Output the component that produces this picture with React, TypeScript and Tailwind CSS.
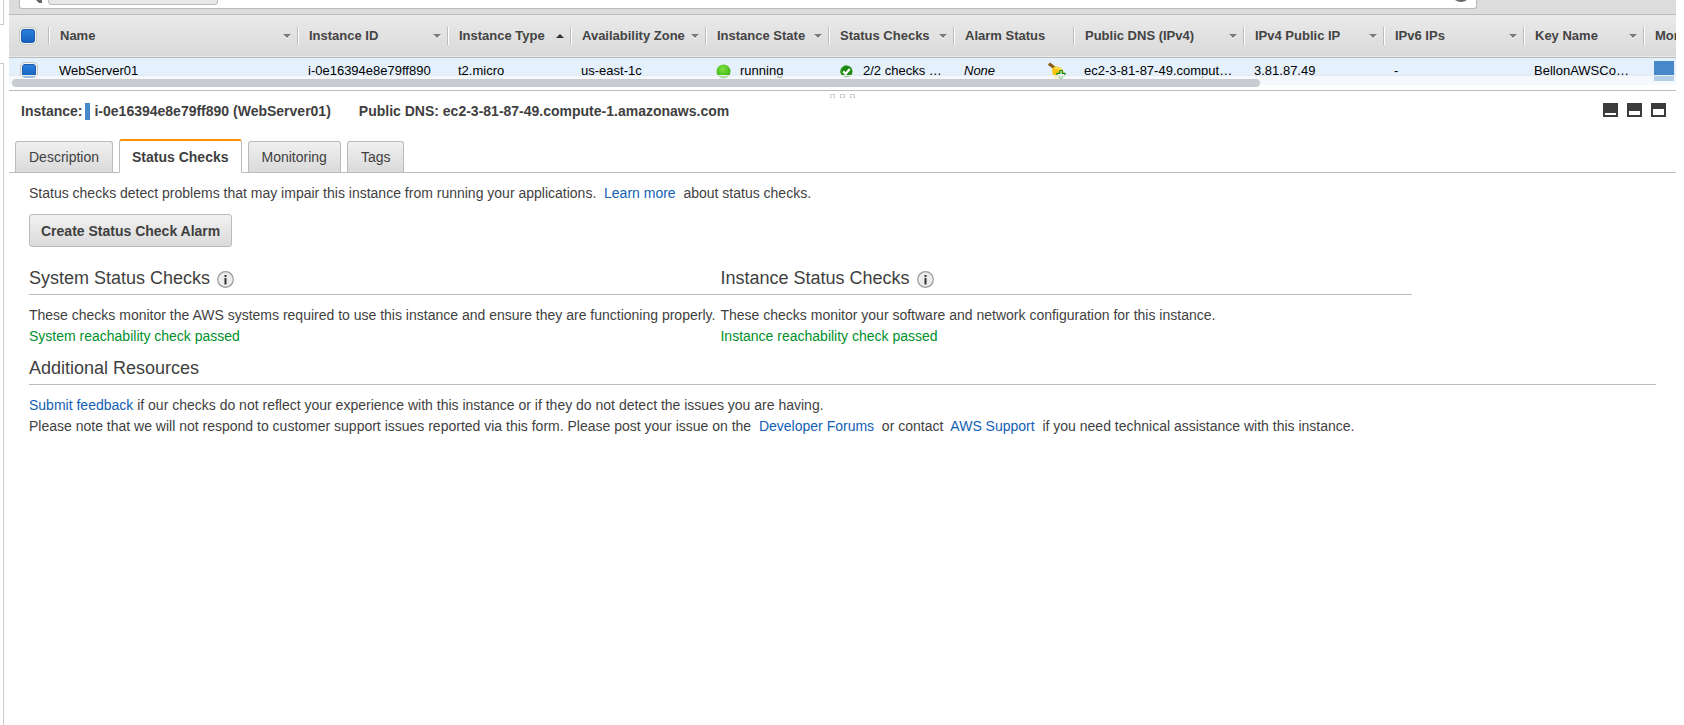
import type { ReactNode } from "react";

type Sort = "none" | "menu" | "asc";

interface Column {
  label: string;
  width: string;
  sort: Sort;
  cell: ReactNode;
}

function RunningIcon() {
  return (
    <svg width="15" height="15" viewBox="0 0 15 15" aria-hidden="true" className="shrink-0">
      <defs>
        <radialGradient id="run" cx="0.45" cy="0.3" r="0.7">
          <stop offset="0" stopColor="#7fe03f" />
          <stop offset="0.7" stopColor="#4cc01f" />
          <stop offset="1" stopColor="#3c9c1c" />
        </radialGradient>
      </defs>
      <circle cx="7.5" cy="7.5" r="7" fill="url(#run)" />
    </svg>
  );
}

function PassedIcon() {
  return (
    <svg width="15" height="13" viewBox="-1 0 15 13" aria-hidden="true" className="shrink-0">
      <circle cx="6.5" cy="6.5" r="6" fill="#1f8a12" />
      <path d="M1 8.5a6 6 0 0 1 6-7.9" fill="none" stroke="#4fae3a" strokeWidth="1" />
      <path d="M3.2 6.400l2.400 2.400L9.800 4" fill="none" stroke="#fff" strokeWidth="2.2" />
    </svg>
  );
}

function AlarmIcon() {
  return (
    <svg width="18" height="18" viewBox="0 0 18 18" aria-hidden="true" className="shrink-0">
      <path d="M2 2.500l4 3" stroke="#8a5a12" strokeWidth="3" strokeLinecap="square" />
      <path d="M5 5.500C8 3.500 12 4.500 15 8l1 3-8 6-2-2c-2-3-2.500-7-1-9.500z" fill="#f9c80e" />
      <path d="M7 7c2-1.500 5-.5 7 2" stroke="#ffe566" strokeWidth="1.500" fill="none" />
      <path d="M7 15.500l6-4 2 4-5 2z" fill="#f3dca0" />
      <path
        d="M11.800 8.500h2.400v2.800h2.800v2.400h-2.800v2.800h-2.400v-2.800H9v-2.400h2.800z"
        fill="#e9f7e6"
        stroke="#178a1c"
        strokeWidth="1.200"
      />
    </svg>
  );
}

function SortArrow({ sort }: { sort: Sort }) {
  if (sort === "none") return null;
  return (
    <svg width="8" height="6" viewBox="0 0 8 6" aria-hidden="true" className="shrink-0">
      {sort === "asc" ? (
        <path d="M0 5h8L4 1z" fill="#333" />
      ) : (
        <>
          <path d="M0 2h8L4 6z" fill="#fff" />
          <path d="M0 1h8L4 5z" fill="#7a7a7a" />
        </>
      )}
    </svg>
  );
}

function InfoIcon() {
  return (
    <svg width="17" height="17" viewBox="0 0 17 17" aria-hidden="true">
      <circle cx="8.500" cy="8.500" r="7.800" fill="#ececec" stroke="#999" strokeWidth="1.200" />
      <rect x="7.500" y="4" width="2" height="2" fill="#333" />
      <rect x="7.500" y="7" width="2" height="6.500" fill="#333" />
    </svg>
  );
}

const columns: Column[] = [
  { label: "Name", width: "w-[249px]", sort: "menu", cell: "WebServer01" },
  { label: "Instance ID", width: "w-[150px]", sort: "menu", cell: "i-0e16394e8e79ff890" },
  { label: "Instance Type", width: "w-[123px]", sort: "asc", cell: "t2.micro" },
  { label: "Availability Zone", width: "w-[135px]", sort: "menu", cell: "us-east-1c" },
  {
    label: "Instance State",
    width: "w-[123px]",
    sort: "menu",
    cell: (
      <span className="flex items-center gap-[9px]">
        <RunningIcon />
        running
      </span>
    ),
  },
  {
    label: "Status Checks",
    width: "w-[125px]",
    sort: "menu",
    cell: (
      <span className="flex items-center gap-[9px]">
        <PassedIcon />
        2/2 checks …
      </span>
    ),
  },
  {
    label: "Alarm Status",
    width: "w-[120px]",
    sort: "none",
    cell: (
      <span className="flex items-center justify-between">
        <em>None</em>
        <AlarmIcon />
      </span>
    ),
  },
  { label: "Public DNS (IPv4)", width: "w-[170px]", sort: "menu", cell: "ec2-3-81-87-49.comput…" },
  { label: "IPv4 Public IP", width: "w-[140px]", sort: "menu", cell: "3.81.87.49" },
  { label: "IPv6 IPs", width: "w-[140px]", sort: "menu", cell: "-" },
  { label: "Key Name", width: "w-[120px]", sort: "menu", cell: "BellonAWSCo…" },
  {
    label: "Monitoring",
    width: "w-[580px]",
    sort: "none",
    cell: <span className="block h-5 w-5 bg-[#4788c8]" />,
  },
];

const checkboxClass =
  "block h-[14px] w-[14px] appearance-none rounded-[3px] border border-[#1a5cab] bg-linear-to-b from-[#2b80dd] to-[#1560bd] shadow-[0_0_0_1px_#f4f4f4,0_0_0_2px_#c6c6c6]";

function InstanceTable() {
  return (
    <div className="relative h-[76px] overflow-hidden border-b border-[#bbb]">
      <table className="w-max table-fixed border-collapse text-left text-[13px] leading-4">
        <thead>
          <tr className="h-[42px] border-b border-[#bbb] bg-linear-to-b from-[#eaeaea] to-[#d9d9d9] text-[#444]">
            <th className="w-[39px] p-0 pl-3">
              <input type="checkbox" defaultChecked aria-label="Select all instances" className={checkboxClass} />
            </th>
            {columns.map((c) => (
              <th key={c.label} className={`${c.width} p-0 font-bold whitespace-nowrap`}>
                <div className="flex h-[18px] items-center justify-between border-l border-[#bbb] pr-[6px] pl-[11px] shadow-[inset_1px_0_0_#fff]">
                  {c.label}
                  <SortArrow sort={c.sort} />
                </div>
              </th>
            ))}
          </tr>
        </thead>
        <tbody>
          <tr className="h-[28px] bg-[#e5f0fd] text-black">
            <td className="p-0 pl-[13px]">
              <input type="checkbox" defaultChecked aria-label="Select WebServer01" className={checkboxClass} />
            </td>
            {columns.map((c) => (
              <td key={c.label} className="overflow-hidden py-0 pr-[7px] pl-[11px] whitespace-nowrap">
                {c.cell}
              </td>
            ))}
          </tr>
        </tbody>
      </table>
      <div className="absolute inset-x-0 bottom-0 h-[15px] border-t border-[#e6e9ee] bg-white/60 pt-[3px] pl-[3px]">
        <div className="h-2 w-3/4 rounded-full bg-[#c9cbd0]" />
      </div>
    </div>
  );
}

const tabs = ["Description", "Status Checks", "Monitoring", "Tags"];

function Tabs() {
  return (
    <div role="tablist" className="flex items-end gap-[6px] border-b border-[#bbb] pl-[6px]">
      {tabs.map((t) =>
        t === "Status Checks" ? (
          <button
            key={t}
            role="tab"
            aria-selected="true"
            className="-mb-px h-[34px] rounded-t-[3px] border border-t-2 border-[#bbb] border-t-[#ff9100] border-b-white bg-white px-3 pt-[2px] font-bold"
          >
            {t}
          </button>
        ) : (
          <button
            key={t}
            role="tab"
            aria-selected="false"
            className="h-[31px] rounded-t-[3px] border border-b-0 border-[#bbb] bg-linear-to-b from-[#f0f0f0] to-[#dadada] px-[13px]"
          >
            {t}
          </button>
        ),
      )}
    </div>
  );
}

function CheckColumn({ title, text, result }: { title: string; text: string; result: string }) {
  return (
    <section>
      <h2 className="mb-[10px] flex items-center gap-[7px] border-b border-[#bbb] pb-px text-lg leading-[29px]">
        {title}
        <span className="pt-[2px]">
          <InfoIcon />
        </span>
      </h2>
      <p className="whitespace-nowrap">{text}</p>
      <p className="text-[#00902b]">{result}</p>
    </section>
  );
}

function Link({ children }: { children: ReactNode }) {
  return (
    <a href="#" className="text-[#1260b5]">
      {children}
    </a>
  );
}

function PaneButton({ label, bar }: { label: string; bar: string }) {
  return (
    <button aria-label={label} className={`h-[14px] w-[15px] border-2 border-[#3c3c3c] bg-white ${bar}`} />
  );
}

export default function App() {
  return (
    <div className="flex min-h-screen bg-white pr-2 font-['Liberation_Sans',Arial,sans-serif] text-sm leading-[21px] text-[#3f3f3f]">
      <aside className="flex w-1 shrink-0 flex-col gap-[38px]">
        <div className="h-[25px] border-r border-b border-[#ccc]" />
        <div className="flex-1 border-t border-r border-[#ccc]" />
      </aside>

      <main className="ml-[5px] min-w-0 flex-1">
        <div className="flex h-[15px] items-start border-b border-[#bbb] bg-[#dcdcdc] pl-[10px]">
          <div className="flex h-[9px] w-[88%] items-start justify-between rounded-b-[3px] border border-t-0 border-[#bbb] bg-white pr-[9px] pl-4">
            <div className="flex items-start gap-[6px]">
              <svg width="6" height="3" viewBox="0 0 6 3" aria-hidden="true">
                <path d="M0 0h6v3H3z" fill="#666" />
              </svg>
              <div className="h-[5px] w-[170px] rounded-b-[4px] border border-t-0 border-[#bbb] bg-[#e8e8e8]" />
            </div>
            <svg width="12" height="2" viewBox="0 0 12 2" aria-hidden="true">
              <path d="M0 0h12Q6 4 0 0z" fill="#666" />
            </svg>
          </div>
        </div>

        <InstanceTable />

        <div className="flex justify-center gap-[5px] pt-[3px]">
          {[0, 1, 2].map((i) => (
            <svg key={i} width="5" height="4" viewBox="0 0 5 4" aria-hidden="true">
              <path d="M0.500 4V.5h4V4M0 3.500h2M3 3.500h2" fill="none" stroke="#ccc" />
            </svg>
          ))}
        </div>

        <div className="flex items-start justify-between pt-[3px] pr-[10px] pl-3 font-bold">
          <div className="flex items-center">
            Instance:
            <span className="mr-1 ml-[3px] h-[17px] w-[5px] bg-[#4788c8]" />
            i-0e16394e8e79ff890 (WebServer01)
            <span className="ml-7">Public DNS: ec2-3-81-87-49.compute-1.amazonaws.com</span>
          </div>
          <div className="flex gap-[9px] pt-[2px]">
            <PaneButton label="Minimize details" bar="border-t-[10px]" />
            <PaneButton label="Split details" bar="border-t-8" />
            <PaneButton label="Maximize details" bar="border-t-[6px]" />
          </div>
        </div>

        <div className="pt-[17px]">
          <Tabs />
        </div>

        <div className="pt-[10px] pr-5 pl-5">
          <p>
            Status checks detect problems that may impair this instance from running your applications.&nbsp;{" "}
            <Link>Learn more</Link>&nbsp; about status checks.
          </p>
          <button className="mt-[10px] block h-[33px] rounded-[3px] border border-[#bbb] bg-linear-to-b from-[#f2f2f2] to-[#dadada] px-[11px] pt-[2px] font-bold">
            Create Status Check Alarm
          </button>

          <div className="mt-[17px] grid w-[85%] grid-cols-2">
            <CheckColumn
              title="System Status Checks"
              text="These checks monitor the AWS systems required to use this instance and ensure they are functioning properly."
              result="System reachability check passed"
            />
            <CheckColumn
              title="Instance Status Checks"
              text="These checks monitor your software and network configuration for this instance."
              result="Instance reachability check passed"
            />
          </div>

          <h2 className="mt-[7px] mb-[10px] border-b border-[#bbb] pb-px text-lg leading-[29px]">
            Additional Resources
          </h2>
          <p>
            <Link>Submit feedback</Link> if our checks do not reflect your experience with this instance or if they do
            not detect the issues you are having.
          </p>
          <p>
            Please note that we will not respond to customer support issues reported via this form. Please post your
            issue on the&nbsp; <Link>Developer Forums</Link>&nbsp; or contact&nbsp; <Link>AWS Support</Link>&nbsp; if you
            need technical assistance with this instance.
          </p>
        </div>
      </main>
    </div>
  );
}
